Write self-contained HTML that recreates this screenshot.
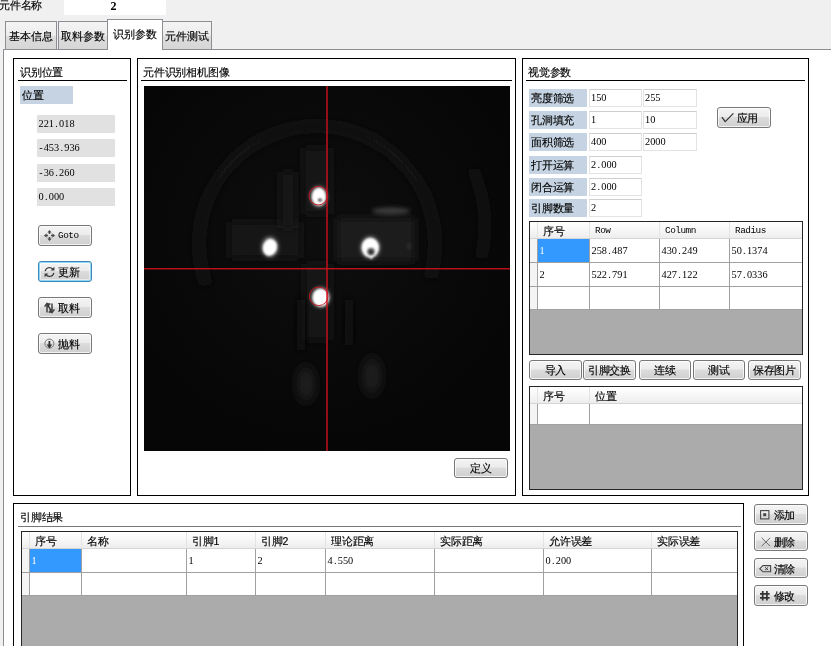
<!DOCTYPE html>
<html lang="zh">
<head>
<meta charset="utf-8">
<title>元件参数</title>
<style>
*{box-sizing:border-box;margin:0;padding:0}
html{width:831px;height:646px;overflow:hidden;background:#f0f0f0}
body{width:831px;height:646px;overflow:hidden;will-change:transform}
body{position:relative;font-family:"Liberation Sans",sans-serif;font-size:10.5px;letter-spacing:-0.2px;line-height:12px;color:#000;-webkit-text-stroke:0.15px currentColor}
.a{position:absolute;white-space:nowrap;overflow:hidden}
.t{position:absolute;white-space:nowrap;height:12px;line-height:12px}
.n{font-family:"Liberation Mono",monospace;font-size:9.4px;letter-spacing:-0.49px;-webkit-text-stroke:0}
.d{font-family:"Liberation Serif",serif;font-size:10.3px;letter-spacing:0;-webkit-text-stroke:0}
.d i{display:inline-block;width:5.15px;text-align:center;font-style:normal}
.panel{position:absolute;border:1px solid #000;background:#fff}
.hr{position:absolute;height:1px;background:#000}
.lab{position:absolute;background:#c5d3e2;height:17.5px;line-height:19px;padding-left:2px;white-space:nowrap;overflow:hidden}
.val{position:absolute;background:#e1e1e1;height:18px;line-height:18px;padding-left:1.5px;white-space:nowrap;overflow:hidden}
.inp{position:absolute;background:#fff;border:1px solid #e3e3e3;border-top-color:#cfcfcf;height:17.5px;line-height:15.5px;padding-left:1px;white-space:nowrap;overflow:hidden}
.btn{position:absolute;border:1px solid #787878;border-radius:3px;background:linear-gradient(#f4f4f4 0%,#ececec 45%,#dcdcdc 50%,#cfcfcf 100%);box-shadow:inset 0 0 0 1px rgba(255,255,255,.75);height:20px;line-height:18px;text-align:center;white-space:nowrap;overflow:hidden}
.btn.foc{border-color:#3f88bb;box-shadow:inset 0 0 0 1px #8fd6f4, inset 0 0 0 2px rgba(255,255,255,.55)}
.btn svg{position:absolute}
.tab{position:absolute;border:1px solid #8c8e94;border-bottom:none;background:linear-gradient(#f4f4f4 0%,#ececec 50%,#dddddd 51%,#d6d6d6 100%);text-align:center;white-space:nowrap;overflow:hidden}
.grid{position:absolute;background:#ababab;border:1px solid #262626;overflow:hidden}
.gh{position:absolute;left:0;top:0;height:17px;background:linear-gradient(#ffffff,#f7f7f7 50%,#ededed);border-bottom:1px solid #d5d5d5}
.gc{position:absolute;background:#fff;border-right:1px solid #a0a0a0;border-bottom:1px solid #a0a0a0;white-space:nowrap;overflow:hidden;padding-left:1.5px}
.rh{position:absolute;background:#f4f4f4;border-right:1px solid #a0a0a0;border-bottom:1px solid #a0a0a0}
.sel{background:#3399ff;color:#fff}
.ht{position:absolute;top:0;height:16px;line-height:18px;white-space:nowrap;overflow:hidden;border-right:1px solid #e4e4e4}
</style>
</head>
<body>

<!-- top bar -->
<div class="t" style="left:-1px;top:-1px">元件名称</div>
<div class="a" style="left:64px;top:0;width:102px;height:15px;background:#fff;text-align:center;font-family:'Liberation Serif',serif;font-weight:bold;font-size:12px;letter-spacing:0;line-height:13px;padding-right:3px;-webkit-text-stroke:0">2</div>

<!-- tab pane -->
<div class="a" id="pane" style="left:3px;top:49px;width:840px;height:610px;background:#fff;border:1px solid #8c8e94"></div>

<!-- tabs -->
<div class="tab" style="left:5px;top:21px;width:52px;height:28px;line-height:29px">基本信息</div>
<div class="tab" style="left:58px;top:21px;width:50px;height:28px;line-height:29px">取料参数</div>
<div class="tab" style="left:162px;top:21px;width:50px;height:28px;line-height:29px">元件测试</div>
<div class="tab" style="left:107px;top:19px;width:56px;height:31px;line-height:28px;background:#fff">识别参数</div>

<!-- panel 1 -->
<div class="panel" style="left:13px;top:58px;width:118px;height:438px"></div>
<div class="t" style="left:20px;top:66px">识别位置</div>
<div class="hr" style="left:18px;top:80px;width:109px"></div>
<div class="lab" style="left:20px;top:86px;width:53px">位置</div>
<div class="val d" style="left:37px;top:115px;width:78px">221<i>.</i>018</div>
<div class="val d" style="left:37px;top:139px;width:78px"><i>-</i>453<i>.</i>936</div>
<div class="val d" style="left:37px;top:164px;width:78px"><i>-</i>36<i>.</i>260</div>
<div class="val d" style="left:37px;top:188px;width:78px">0<i>.</i>000</div>

<div class="btn" style="left:38px;top:225px;width:54px;height:21px">
 <svg style="left:5px;top:4px" width="11" height="11" viewBox="0 0 11 11"><path d="M5.5 0 L7.7 2.6 H6.3 V4 H4.7 V2.6 H3.3 Z M5.5 11 L7.7 8.4 H6.3 V7 H4.7 V8.4 H3.3 Z M0 5.5 L2.6 3.3 V4.7 H4 V6.3 H2.6 V7.7 Z M11 5.5 L8.4 3.3 V4.7 H7 V6.3 H8.4 V7.7 Z" fill="#4a4a4a"/></svg>
 <span class="n" style="position:absolute;left:19px;top:0.5px">Goto</span>
</div>
<div class="btn foc" style="left:38px;top:261px;width:54px;height:21px">
 <svg style="left:5px;top:4px" width="11" height="12" viewBox="0 0 11 12"><path d="M1.2 5.2 A4.3 4.3 0 0 1 8.8 3.2 M9.8 6.8 A4.3 4.3 0 0 1 2.2 8.8" fill="none" stroke="#3c3c3c" stroke-width="1.25"/><path d="M10.4 0.8 V4.6 H6.6 Z M0.6 11.2 V7.4 H4.4 Z" fill="#3c3c3c"/></svg>
 <span style="position:absolute;left:19px;top:0.5px">更新</span>
</div>
<div class="btn" style="left:38px;top:297px;width:54px;height:21px">
 <svg style="left:5px;top:4px" width="11" height="12" viewBox="0 0 11 12"><path d="M3 10.5 V3.2 M0.6 4.6 L3 1.4 L5.4 4.6 M3 2 H6.4 M8 1.5 V8.8 M5.6 7.4 L8 10.6 L10.4 7.4 M8 10 H4.6 M3.6 3.2 L7.4 8.8" fill="none" stroke="#333" stroke-width="1.4"/></svg>
 <span style="position:absolute;left:19px;top:0.5px">取料</span>
</div>
<div class="btn" style="left:38px;top:333px;width:54px;height:21px">
 <svg style="left:5px;top:4px" width="11" height="12" viewBox="0 0 11 12"><circle cx="5.4" cy="5.6" r="4.5" fill="none" stroke="#777" stroke-width="1"/><path d="M4.5 3 H6.3 V6.6 H8.2 L5.4 10.4 L2.6 6.6 H4.5 Z" fill="#333"/></svg>
 <span style="position:absolute;left:19px;top:0.5px">抛料</span>
</div>

<!-- panel 2 -->
<div class="panel" style="left:137px;top:58px;width:379px;height:438px"></div>
<div class="t" style="left:143px;top:66px">元件识别相机图像</div>
<div class="hr" style="left:141px;top:80px;width:371px"></div>
<svg class="a" style="left:144px;top:86px" width="366" height="365" viewBox="144 86 366 365">
 <defs>
  <filter id="b1" x="-50%" y="-50%" width="200%" height="200%"><feGaussianBlur stdDeviation="0.9"/></filter>
  <filter id="b2" x="-80%" y="-80%" width="260%" height="260%"><feGaussianBlur stdDeviation="2.2"/></filter>
  <filter id="b3" x="-50%" y="-50%" width="200%" height="200%"><feGaussianBlur stdDeviation="4"/></filter>
  <filter id="b5" x="-80%" y="-80%" width="260%" height="260%"><feGaussianBlur stdDeviation="6"/></filter>
  <radialGradient id="vg" cx="48%" cy="40%" r="62%"><stop offset="0" stop-color="#0e0e0e"/><stop offset="0.6" stop-color="#090909"/><stop offset="1" stop-color="#060606"/></radialGradient>
 </defs>
 <rect x="144" y="86" width="366" height="365" fill="url(#vg)"/>
 <!-- faint ring -->
 <path d="M206.4 285 A118 118 0 1 1 430 278" fill="none" stroke="#171717" stroke-width="9" filter="url(#b3)"/>
 <path d="M473 169 Q492 215 481 258" fill="none" stroke="#121212" stroke-width="8" filter="url(#b3)"/>
 <!-- faint cross body -->
 <rect x="303" y="148" width="28" height="66" fill="#161616" filter="url(#b3)"/>
 <rect x="304" y="264" width="27" height="76" fill="#131313" filter="url(#b3)"/>
 <rect x="229" y="222" width="72" height="36" fill="#141414" filter="url(#b3)"/>
 <rect x="337" y="218" width="78" height="43" fill="#1a1a1a" filter="url(#b3)"/>
 <rect x="280" y="172" width="16" height="56" fill="#121212" filter="url(#b3)"/>
 <ellipse cx="391" cy="211" rx="19" ry="3.5" fill="#3c3c3c" filter="url(#b2)"/>
 <ellipse cx="409" cy="246" rx="3" ry="4" fill="#262626" filter="url(#b1)"/>
 <ellipse cx="306" cy="384" rx="8" ry="18" fill="#202020" filter="url(#b5)"/>
 <ellipse cx="372" cy="376" rx="8" ry="19" fill="#222" filter="url(#b5)"/>
 <rect x="297" y="300" width="8" height="50" fill="#111" filter="url(#b3)"/>
 <rect x="345" y="300" width="8" height="45" fill="#111" filter="url(#b3)"/>
 <!-- bright pins -->
 <g filter="url(#b2)" opacity="0.55">
  <ellipse cx="318.9" cy="196.6" rx="8" ry="10" fill="#fff"/>
  <ellipse cx="269.9" cy="247" rx="8" ry="10" fill="#fff"/>
  <ellipse cx="370.3" cy="247.4" rx="9.4" ry="10.6" fill="#fff"/>
  <ellipse cx="320.7" cy="297.4" rx="9" ry="9.8" fill="#fff"/>
 </g>
 <g filter="url(#b1)">
  <ellipse cx="318.9" cy="196.7" rx="7" ry="8.9" fill="#fff"/>
  <ellipse cx="269.9" cy="247.4" rx="7" ry="8.4" fill="#fff" transform="rotate(18 269.9 247.4)"/>
  <ellipse cx="370.3" cy="247.6" rx="8.6" ry="9.6" fill="#fff"/>
  <path d="M367 254 L371.4 259.4 L374.6 254 Z" fill="#fff"/>
  <ellipse cx="320.7" cy="297.6" rx="8.1" ry="8.9" fill="#fff"/>
 </g>
 <ellipse cx="320" cy="199.9" rx="1.9" ry="1.5" fill="#2a2a2a" filter="url(#b1)"/>
 <circle cx="371" cy="251.6" r="3.9" fill="#6a6a6a" filter="url(#b1)"/>
 <circle cx="371" cy="252" r="1.8" fill="#1c1c1c" filter="url(#b1)"/>
 <!-- crosshair -->
 <rect x="144" y="268.1" width="366" height="1.3" fill="#cc121c"/>
 <rect x="326.3" y="86" width="1.4" height="365" fill="#cc121c"/>
 <circle cx="318.3" cy="195.6" r="9.3" fill="none" stroke="#cc121c" stroke-width="0.9"/>
 <circle cx="318.7" cy="296.3" r="9.3" fill="none" stroke="#cc121c" stroke-width="0.9"/>
</svg>
<div class="btn" style="left:454px;top:458px;width:54px;height:20px">定义</div>

<!-- panel 3 -->
<div class="panel" style="left:522px;top:58px;width:287px;height:438px"></div>
<div class="t" style="left:528px;top:66px">视觉参数</div>
<div class="hr" style="left:526px;top:80px;width:279px"></div>

<div class="lab" style="left:529px;top:89px;width:58px">亮度筛选</div>
<div class="inp d" style="left:589px;top:89px;width:53px">150</div>
<div class="inp d" style="left:643px;top:89px;width:54px">255</div>
<div class="lab" style="left:529px;top:111px;width:58px">孔洞填充</div>
<div class="inp d" style="left:589px;top:111px;width:53px">1</div>
<div class="inp d" style="left:643px;top:111px;width:54px">10</div>
<div class="lab" style="left:529px;top:133px;width:58px">面积筛选</div>
<div class="inp d" style="left:589px;top:133px;width:53px">400</div>
<div class="inp d" style="left:643px;top:133px;width:54px">2000</div>
<div class="lab" style="left:529px;top:156px;width:58px">打开运算</div>
<div class="inp d" style="left:589px;top:156px;width:53px">2<i>.</i>000</div>
<div class="lab" style="left:529px;top:178px;width:58px">闭合运算</div>
<div class="inp d" style="left:589px;top:178px;width:53px">2<i>.</i>000</div>
<div class="lab" style="left:529px;top:199px;width:58px">引脚数量</div>
<div class="inp d" style="left:589px;top:199px;width:53px">2</div>

<div class="btn" style="left:717px;top:107px;width:54px;height:21px">
 <svg style="left:0;top:0" width="20" height="19" viewBox="0 0 20 19"><path d="M3.9 9.2 L7.2 13.6 L15.4 5.4" fill="none" stroke="#2c2c2c" stroke-width="1.15"/></svg>
 <span style="position:absolute;left:18.5px;top:0.5px">应用</span>
</div>

<!-- grid 1 -->
<div class="grid" style="left:529px;top:221px;width:274px;height:134px">
 <div class="gh" style="width:273px">
  <div class="ht" style="left:0;width:8px"></div>
  <div class="ht" style="left:8px;width:52px;padding-left:5px">序号</div>
  <div class="ht n" style="left:60px;width:70px;padding-left:5px">Row</div>
  <div class="ht n" style="left:130px;width:70px;padding-left:5px">Column</div>
  <div class="ht n" style="left:200px;width:73px;padding-left:5px">Radius</div>
 </div>
 <div class="rh" style="left:0;top:17px;width:8px;height:24px"></div>
 <div class="gc d sel" style="left:8px;top:17px;width:52px;height:24px;line-height:24px">1</div>
 <div class="gc d" style="left:60px;top:17px;width:70px;height:24px;line-height:24px">258<i>.</i>487</div>
 <div class="gc d" style="left:130px;top:17px;width:70px;height:24px;line-height:24px">430<i>.</i>249</div>
 <div class="gc d" style="left:200px;top:17px;width:73px;height:24px;line-height:24px">50<i>.</i>1374</div>
 <div class="rh" style="left:0;top:41px;width:8px;height:24px"></div>
 <div class="gc d" style="left:8px;top:41px;width:52px;height:24px;line-height:24px">2</div>
 <div class="gc d" style="left:60px;top:41px;width:70px;height:24px;line-height:24px">522<i>.</i>791</div>
 <div class="gc d" style="left:130px;top:41px;width:70px;height:24px;line-height:24px">427<i>.</i>122</div>
 <div class="gc d" style="left:200px;top:41px;width:73px;height:24px;line-height:24px">57<i>.</i>0336</div>
 <div class="rh" style="left:0;top:65px;width:8px;height:23px"></div>
 <div class="gc" style="left:8px;top:65px;width:52px;height:23px"></div>
 <div class="gc" style="left:60px;top:65px;width:70px;height:23px"></div>
 <div class="gc" style="left:130px;top:65px;width:70px;height:23px"></div>
 <div class="gc" style="left:200px;top:65px;width:73px;height:23px"></div>
</div>

<div class="btn" style="left:529px;top:360px;width:53px">导入</div>
<div class="btn" style="left:583px;top:360px;width:53px">引脚交换</div>
<div class="btn" style="left:639px;top:360px;width:52px">连续</div>
<div class="btn" style="left:693px;top:360px;width:52px">测试</div>
<div class="btn" style="left:748px;top:360px;width:53px">保存图片</div>

<!-- grid 2 -->
<div class="grid" style="left:529px;top:386px;width:274px;height:104px">
 <div class="gh" style="width:273px">
  <div class="ht" style="left:0;width:8px"></div>
  <div class="ht" style="left:8px;width:52px;padding-left:5px">序号</div>
  <div class="ht" style="left:60px;width:213px;padding-left:5px;border-right:none">位置</div>
 </div>
 <div class="rh" style="left:0;top:17px;width:8px;height:21px"></div>
 <div class="gc" style="left:8px;top:17px;width:52px;height:21px"></div>
 <div class="gc" style="left:60px;top:17px;width:213px;height:21px;border-right:none"></div>
</div>

<!-- bottom panel -->
<div class="panel" style="left:13px;top:503px;width:731px;height:160px"></div>
<div class="t" style="left:20px;top:511px">引脚结果</div>
<div class="hr" style="left:18px;top:526px;width:723px;background:#777"></div>

<!-- grid 3 -->
<div class="grid" style="left:21px;top:531px;width:717px;height:130px">
 <div class="gh" style="width:716px">
  <div class="ht" style="left:0;width:8px"></div>
  <div class="ht" style="left:8px;width:52px;padding-left:5px">序号</div>
  <div class="ht" style="left:60px;width:105px;padding-left:5px">名称</div>
  <div class="ht" style="left:165px;width:69px;padding-left:5px">引脚1</div>
  <div class="ht" style="left:234px;width:70px;padding-left:5px">引脚2</div>
  <div class="ht" style="left:304px;width:109px;padding-left:5px">理论距离</div>
  <div class="ht" style="left:413px;width:109px;padding-left:5px">实际距离</div>
  <div class="ht" style="left:522px;width:108px;padding-left:5px">允许误差</div>
  <div class="ht" style="left:630px;width:86px;padding-left:5px;border-right:none">实际误差</div>
 </div>
 <div class="rh" style="left:0;top:17px;width:8px;height:24px"></div>
 <div class="gc d sel" style="left:8px;top:17px;width:52px;height:24px;line-height:24px">1</div>
 <div class="gc" style="left:60px;top:17px;width:105px;height:24px"></div>
 <div class="gc d" style="left:165px;top:17px;width:69px;height:24px;line-height:24px">1</div>
 <div class="gc d" style="left:234px;top:17px;width:70px;height:24px;line-height:24px">2</div>
 <div class="gc d" style="left:304px;top:17px;width:109px;height:24px;line-height:24px">4<i>.</i>550</div>
 <div class="gc" style="left:413px;top:17px;width:109px;height:24px"></div>
 <div class="gc d" style="left:522px;top:17px;width:108px;height:24px;line-height:24px">0<i>.</i>200</div>
 <div class="gc" style="left:630px;top:17px;width:86px;height:24px;border-right:none"></div>
 <div class="rh" style="left:0;top:41px;width:8px;height:23px"></div>
 <div class="gc" style="left:8px;top:41px;width:52px;height:23px"></div>
 <div class="gc" style="left:60px;top:41px;width:105px;height:23px"></div>
 <div class="gc" style="left:165px;top:41px;width:69px;height:23px"></div>
 <div class="gc" style="left:234px;top:41px;width:70px;height:23px"></div>
 <div class="gc" style="left:304px;top:41px;width:109px;height:23px"></div>
 <div class="gc" style="left:413px;top:41px;width:109px;height:23px"></div>
 <div class="gc" style="left:522px;top:41px;width:108px;height:23px"></div>
 <div class="gc" style="left:630px;top:41px;width:86px;height:23px;border-right:none"></div>
</div>

<!-- right buttons -->
<div class="btn" style="left:754px;top:504px;width:54px;height:21px">
 <svg style="left:5px;top:5px" width="10" height="10" viewBox="0 0 10 10"><rect x="0.6" y="0.6" width="8.3" height="8.3" fill="none" stroke="#444" stroke-width="1.1"/><rect x="3.2" y="3.2" width="3" height="3" fill="#444"/></svg>
 <span style="position:absolute;left:18.5px;top:0.5px">添加</span>
</div>
<div class="btn" style="left:754px;top:531px;width:54px">
 <svg style="left:5.5px;top:5px" width="10" height="10" viewBox="0 0 10 10"><path d="M0.6 0.8 L9.2 9.2 M9.2 0.8 L0.6 9.2" stroke="#6a6a6a" stroke-width="1" fill="none"/></svg>
 <span style="position:absolute;left:18.5px;top:0.5px">删除</span>
</div>
<div class="btn" style="left:754px;top:558px;width:54px">
 <svg style="left:4px;top:6px" width="13" height="8" viewBox="0 0 13 8"><path d="M4 0.6 H11.6 V6.8 H4 L0.8 3.7 Z" fill="none" stroke="#444" stroke-width="1.1"/><path d="M6 2.2 L9.2 5.2 M9.2 2.2 L6 5.2" stroke="#444" stroke-width="1"/></svg>
 <span style="position:absolute;left:18.5px;top:0.5px">清除</span>
</div>
<div class="btn" style="left:754px;top:585px;width:54px;height:21px">
 <svg style="left:4.5px;top:4.5px" width="10" height="10" viewBox="0 0 10 10"><path d="M2.7 0 V9.6 M6.9 0 V9.6 M0 2.8 H9.6 M0 6.8 H9.6" stroke="#333" stroke-width="1.7" fill="none"/></svg>
 <span style="position:absolute;left:18.5px;top:0.5px">修改</span>
</div>

</body>
</html>
